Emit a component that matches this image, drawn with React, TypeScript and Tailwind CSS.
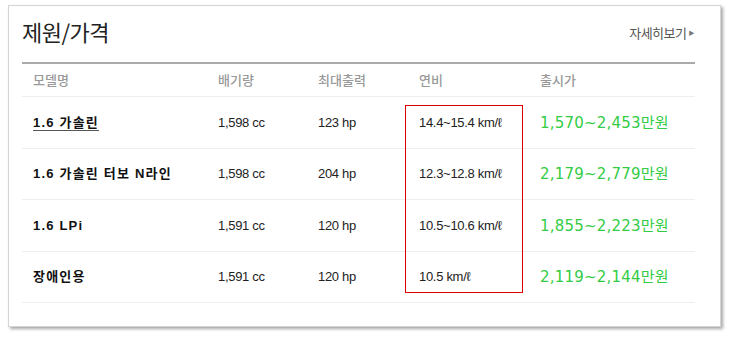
import React from 'react';

const rows = [
  { name: '1.6 가솔린', link: true, cc: '1,598', hp: '123', fuel: '14.4~15.4', price: '1,570~2,453' },
  { name: '1.6 가솔린 터보 N라인', link: false, cc: '1,598', hp: '204', fuel: '12.3~12.8', price: '2,179~2,779' },
  { name: '1.6 LPi', link: false, cc: '1,591', hp: '120', fuel: '10.5~10.6', price: '1,855~2,223' },
  { name: '장애인용', link: false, cc: '1,591', hp: '120', fuel: '10.5', price: '2,119~2,144' },
];

const kr = "font-['Noto_Sans_CJK_KR','Noto_Sans',sans-serif]";
const num = "font-['Liberation_Sans','Noto_Sans_CJK_KR',sans-serif]";

const App = () => {
  return (
    <div className="w-[729px] h-[338px] bg-white pt-[5px] pl-[8px]">
      {/* card */}
      <div className="w-[713px] h-[322px] bg-white border border-[#d4d4d4] shadow-[2px_2px_3px_rgba(0,0,0,0.35)] px-[13px]">
        {/* title */}
        <div className="h-[56px] pb-[6px] flex items-center justify-between">
          <h2 className={`${kr} text-[22px] text-[#222] tracking-[-0.5px]`}>제원/가격</h2>
          <a className={`${kr} text-[13px] text-[#555] tracking-[-0.5px] flex items-center gap-[2px] mr-[13px] mt-[3px]`}>
            자세히보기
            <span className="text-[6px] text-[#777]">▶</span>
          </a>
        </div>

        {/* table */}
        <div className="relative w-[673px]">
          <div className={`${kr} h-[35px] border-t-2 border-b border-t-[#aaa] border-b-[#eee] grid grid-cols-[196px_100px_101px_121px_1fr] items-center text-[13px] text-[#999] font-medium`}>
            <div className="pl-[11px]">모델명</div>
            <div>배기량</div>
            <div>최대출력</div>
            <div>연비</div>
            <div>출시가</div>
          </div>
          {rows.map((r, i) => (
            <div
              key={i}
              className="h-[51.5px] border-b border-[#eee] grid grid-cols-[196px_100px_101px_121px_1fr] items-center"
            >
              <div className={`${num} pl-[11px] text-[13px] font-bold text-[#111] tracking-[1.2px]`}>
                <span className={r.link ? 'underline underline-offset-[3px] decoration-[#555]' : ''}>{r.name}</span>
              </div>
              <div className={`${num} text-[13px] text-[#222] tracking-[-0.3px]`}>{r.cc} cc</div>
              <div className={`${num} text-[13px] text-[#222] tracking-[-0.3px]`}>{r.hp} hp</div>
              <div className={`${num} text-[13px] text-[#222] tracking-[-0.3px]`}>{r.fuel} km/ℓ</div>
              <div className="font-['DejaVu_Sans','Noto_Sans_CJK_KR',sans-serif] text-[15px] text-[#33cc44] tracking-[0.2px]">
                {r.price}
                <span className={kr}>만원</span>
              </div>
            </div>
          ))}

          {/* highlight box */}
          <div className="absolute left-[383px] top-[43px] w-[118px] h-[188px] border border-[#e00000] pointer-events-none" />
        </div>
      </div>
    </div>
  );
};

export default App;
